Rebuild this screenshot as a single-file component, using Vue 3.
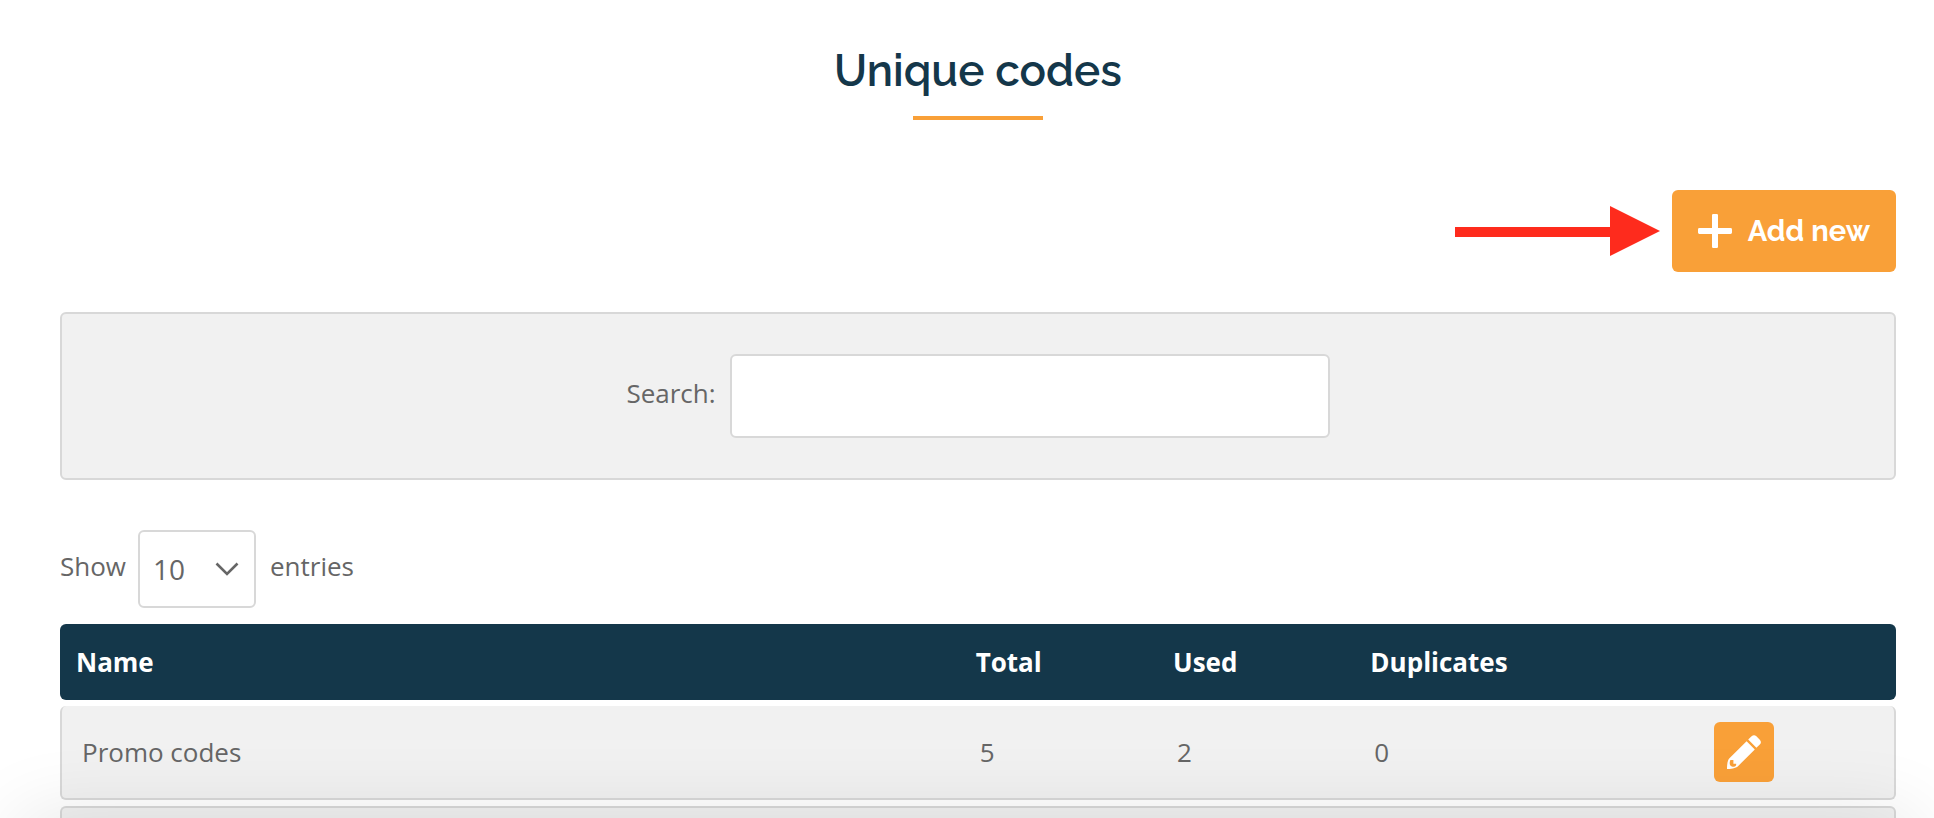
<script setup>
import { ref } from 'vue'

const query = ref('')
const pageSize = ref(10)
const rows = ref([
  { name: 'Promo codes', total: 5, used: 2, duplicates: 0 },
  { name: '', total: '', used: '', duplicates: '' },
])
</script>

<template>
  <main class="page">
    <header class="title">
      <h1>Unique codes</h1>
    </header>

    <div class="toolbar">
      <svg class="arrow" viewBox="0 0 205 50" aria-hidden="true">
        <path d="M0 21H155V0L205 25L155 50V31H0Z" fill="#fe2b1d" />
      </svg>
      <button class="add" type="button">
        <svg viewBox="0 0 34 34" aria-hidden="true">
          <path
            d="M15.2 0H18.8Q20 0 20 1.2V14H32.6Q34 14 34 15.4V18.6Q34 20 32.6 20H20V32.8Q20 34 18.8 34H15.2Q14 34 14 32.8V20H1.4Q0 20 0 18.6V15.4Q0 14 1.4 14H14V1.2Q14 0 15.2 0Z"
            fill="#fff"
          />
        </svg>
        <span>Add new</span>
      </button>
    </div>

    <section class="filter">
      <label for="search">Search:</label>
      <input id="search" v-model="query" type="text" />
    </section>

    <div class="length">
      <label for="size">Show</label>
      <span class="picker">
        <select id="size" v-model="pageSize">
          <option :value="10">10</option>
          <option :value="25">25</option>
          <option :value="50">50</option>
        </select>
        <svg viewBox="0 0 24 14" aria-hidden="true">
          <path d="M1.5 1.5L12 12L22.5 1.5" fill="none" stroke="#666" stroke-width="2.6" />
        </svg>
      </span>
      <span>entries</span>
    </div>

    <table>
      <colgroup>
        <col class="c-name" />
        <col class="c-num" />
        <col class="c-num" />
        <col class="c-dup" />
        <col />
      </colgroup>
      <thead>
        <tr>
          <th>Name</th>
          <th>Total</th>
          <th>Used</th>
          <th>Duplicates</th>
          <th></th>
        </tr>
      </thead>
      <tbody>
        <tr v-for="(row, i) in rows" :key="i">
          <td>{{ row.name }}</td>
          <td>{{ row.total }}</td>
          <td>{{ row.used }}</td>
          <td>{{ row.duplicates }}</td>
          <td>
            <button v-if="row.name" class="edit" type="button" aria-label="Edit">
              <svg viewBox="0 0 34 34" aria-hidden="true">
                <path
                  fill="#fff"
                  fill-rule="evenodd"
                  d="M19.6 6.2L27.8 14.4L11 31.2C9 33.2 3 34 0 34C0 31 .2 26 2.2 23.6ZM3.4 25C2 28 2.6 31.6 5.6 31.8C8 31.8 9.4 31 9.2 28.8H6.4V25Z"
                />
                <path fill="#fff" d="M21.2 4.6L24.6 1.2Q27-.9 29.4 1.2L32.8 4.8Q35 7.2 32.8 9.4L29.4 12.8Z" />
              </svg>
            </button>
          </td>
        </tr>
      </tbody>
    </table>

    <div class="edge" aria-hidden="true"></div>
  </main>
</template>

<style>
body {
  background: #fff;
}
</style>

<style scoped>
* {
  box-sizing: border-box;
}

.page {
  height: 100vh;
  overflow: hidden;
  padding: 42px 38px 0 60px;
  font: 26px/36px "Open Sans", "Noto Sans", sans-serif;
  color: #666;
}

.title {
  display: flex;
  flex-direction: column;
  align-items: center;
  gap: 16px;
}

.title::after {
  content: "";
  width: 130px;
  height: 4px;
  background: #f9a038;
}

h1 {
  margin: 0;
  font: 600 44px/58px Raleway, Lato, sans-serif;
  color: #14374a;
}

.toolbar {
  display: flex;
  align-items: center;
  justify-content: flex-end;
  gap: 12px;
  margin-top: 70px;
}

.arrow {
  width: 205px;
  height: 50px;
}

.add {
  display: flex;
  align-items: center;
  gap: 16px;
  height: 82px;
  padding: 0 26px;
  border: 0;
  border-radius: 6px;
  background: #f9a038;
  color: #fff;
  font: 700 29px/36px Raleway, Lato, sans-serif;
}

.add svg,
.edit svg {
  display: block;
  width: 34px;
  height: 34px;
}

.filter {
  display: flex;
  justify-content: center;
  gap: 14px;
  margin-top: 40px;
  padding: 40px;
  border: 2px solid #d8d8d8;
  border-radius: 6px;
  background: #f1f1f1;
}

.filter label {
  padding-top: 21px;
}

.filter input {
  width: 600px;
  height: 84px;
  padding: 0 16px;
  border: 2px solid #d8d8d8;
  border-radius: 6px;
  background: #fff;
  font: inherit;
  color: inherit;
}

.length {
  display: flex;
  align-items: center;
  gap: 12px;
  margin-top: 50px;
}

.length > label,
.length > span:last-child {
  padding-bottom: 6px;
}

.length > span:last-child {
  padding-left: 2px;
}

.picker {
  display: grid;
  align-items: center;
}

.picker > * {
  grid-area: 1 / 1;
}

.picker svg {
  justify-self: end;
  width: 24px;
  height: 14px;
  margin-right: 17px;
  pointer-events: none;
}

select {
  appearance: none;
  width: 118px;
  height: 78px;
  padding: 0 13px;
  border: 2px solid #d8d8d8;
  border-radius: 6px;
  background: #fff;
  color: inherit;
  font: 28px/36px "Open Sans", "Noto Sans", sans-serif;
}

table {
  width: 100%;
  margin-top: 10px;
  table-layout: fixed;
  border-collapse: separate;
  border-spacing: 0 6px;
}

.c-name {
  width: 49%;
}

.c-num {
  width: 10.75%;
}

.c-dup {
  width: 13%;
}

th {
  height: 76px;
  padding: 0 16px;
  background: #14374a;
  color: #fff;
  text-align: left;
  font-weight: 700;
}

td {
  height: 94px;
  padding: 0 20px;
  border: solid #d8d8d8;
  border-width: 2px 0;
  background: #f1f1f1;
}

tbody tr:first-child td {
  border-top-width: 0;
}

th:first-child,
td:first-child {
  border-radius: 6px 0 0 6px;
}

th:last-child,
td:last-child {
  border-radius: 0 6px 6px 0;
}

td:first-child {
  border-left-width: 2px;
}

td:last-child {
  border-right-width: 2px;
}

.edit {
  display: flex;
  align-items: center;
  justify-content: center;
  width: 60px;
  height: 60px;
  margin: 0 auto;
  padding: 0;
  border: 0;
  border-radius: 6px;
  background: #f9a038;
}

.edge {
  position: fixed;
  top: 100%;
  left: 20px;
  right: 20px;
  height: 80px;
  box-shadow: 0 0 80px rgb(0 0 0 / 11%);
  pointer-events: none;
}
</style>
